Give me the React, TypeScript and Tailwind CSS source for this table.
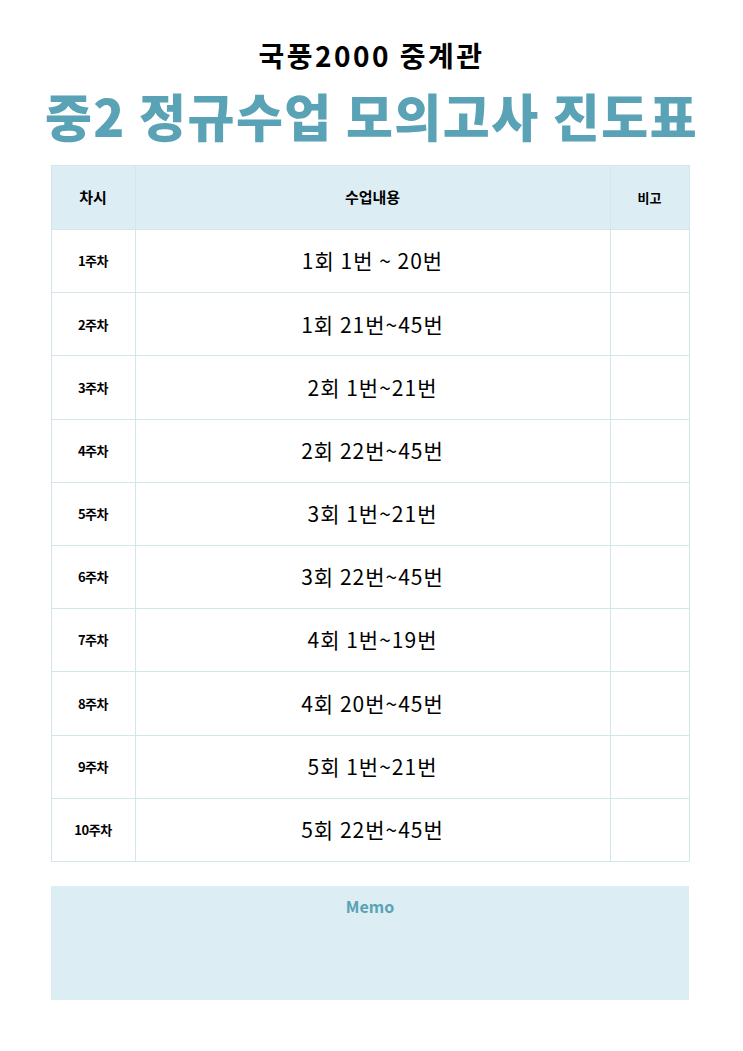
import React from 'react';

const rows = [
  { week: '1주차', content: '1회 1번 ~ 20번' },
  { week: '2주차', content: '1회 21번~45번' },
  { week: '3주차', content: '2회 1번~21번' },
  { week: '4주차', content: '2회 22번~45번' },
  { week: '5주차', content: '3회 1번~21번' },
  { week: '6주차', content: '3회 22번~45번' },
  { week: '7주차', content: '4회 1번~19번' },
  { week: '8주차', content: '4회 20번~45번' },
  { week: '9주차', content: '5회 1번~21번' },
  { week: '10주차', content: '5회 22번~45번' },
];

const font = { fontFamily: '"Noto Sans CJK KR", "Noto Sans", sans-serif' };

export default function App() {
  return (
    <div className="w-[743px] h-[1051px] bg-white flex flex-col items-center" style={font}>
      <h2 className="mt-[36px] h-[38px] text-[28px] leading-[38px] font-bold text-black tracking-[2.5px]">
        국풍2000 중계관
      </h2>
      <h1 className="mt-[6px] h-[70px] text-[51px] leading-[70px] font-black text-[#5aa2b5] tracking-[1.5px]">
        중2 정규수업 모의고사 진도표
      </h1>

      <table className="mt-[15px] w-[639px] -ml-[3px] border-collapse table-fixed">
        <colgroup>
          <col className="w-[84px]" />
          <col />
          <col className="w-[79px]" />
        </colgroup>
        <thead>
          <tr className="h-[64px] bg-[#dcedf4]">
            <th className="border border-[#d3e6ec] text-[15px] font-bold text-black">차시</th>
            <th className="border border-[#d3e6ec] text-[15px] font-bold text-black">수업내용</th>
            <th className="border border-[#d3e6ec] text-[13px] font-bold text-black">비고</th>
          </tr>
        </thead>
        <tbody>
          {rows.map((r) => (
            <tr key={r.week} className="h-[63.2px]">
              <td className="border border-[#d3e6ec] text-center text-[13px] font-bold text-black tracking-[-0.5px]">
                {r.week}
              </td>
              <td className="border border-[#d3e6ec] text-center text-[21px] font-normal text-black tracking-[1px]">
                {r.content}
              </td>
              <td className="border border-[#d3e6ec]"></td>
            </tr>
          ))}
        </tbody>
      </table>

      <div className="mt-[24px] -ml-[3px] w-[638px] h-[114px] bg-[#dcedf4] flex justify-center pt-[10px]">
        <span className="text-[16px] font-semibold text-[#5aa2b5] leading-[20px]">Memo</span>
      </div>
    </div>
  );
}
